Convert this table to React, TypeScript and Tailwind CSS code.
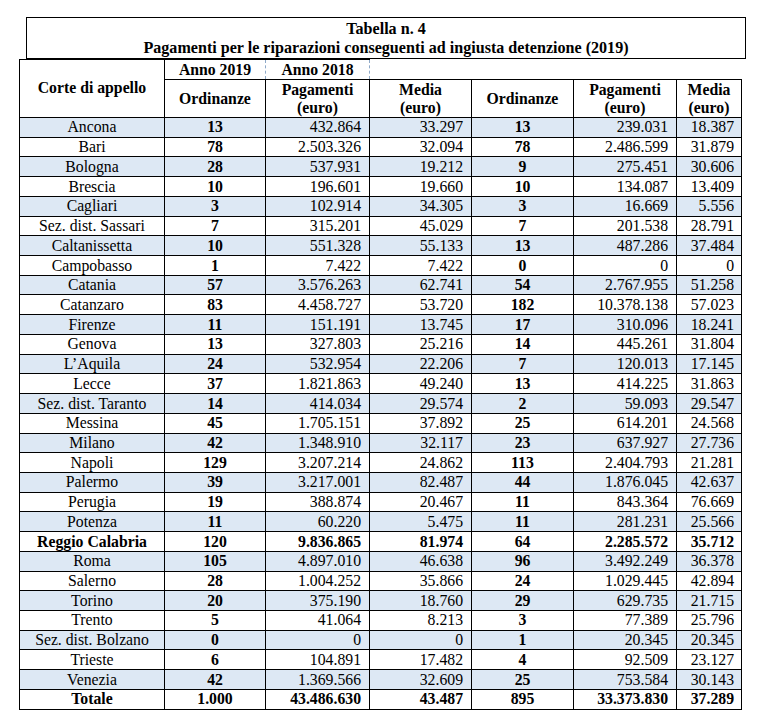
type Row = {
  corte: string;
  ord19: string;
  pag19: string;
  media19: string;
  ord18: string;
  pag18: string;
  media18: string;
  bold?: boolean;
};

const rows: Row[] = [
  { corte: 'Ancona', ord19: '13', pag19: '432.864', media19: '33.297', ord18: '13', pag18: '239.031', media18: '18.387' },
  { corte: 'Bari', ord19: '78', pag19: '2.503.326', media19: '32.094', ord18: '78', pag18: '2.486.599', media18: '31.879' },
  { corte: 'Bologna', ord19: '28', pag19: '537.931', media19: '19.212', ord18: '9', pag18: '275.451', media18: '30.606' },
  { corte: 'Brescia', ord19: '10', pag19: '196.601', media19: '19.660', ord18: '10', pag18: '134.087', media18: '13.409' },
  { corte: 'Cagliari', ord19: '3', pag19: '102.914', media19: '34.305', ord18: '3', pag18: '16.669', media18: '5.556' },
  { corte: 'Sez. dist. Sassari', ord19: '7', pag19: '315.201', media19: '45.029', ord18: '7', pag18: '201.538', media18: '28.791' },
  { corte: 'Caltanissetta', ord19: '10', pag19: '551.328', media19: '55.133', ord18: '13', pag18: '487.286', media18: '37.484' },
  { corte: 'Campobasso', ord19: '1', pag19: '7.422', media19: '7.422', ord18: '0', pag18: '0', media18: '0' },
  { corte: 'Catania', ord19: '57', pag19: '3.576.263', media19: '62.741', ord18: '54', pag18: '2.767.955', media18: '51.258' },
  { corte: 'Catanzaro', ord19: '83', pag19: '4.458.727', media19: '53.720', ord18: '182', pag18: '10.378.138', media18: '57.023' },
  { corte: 'Firenze', ord19: '11', pag19: '151.191', media19: '13.745', ord18: '17', pag18: '310.096', media18: '18.241' },
  { corte: 'Genova', ord19: '13', pag19: '327.803', media19: '25.216', ord18: '14', pag18: '445.261', media18: '31.804' },
  { corte: 'L\u2019Aquila', ord19: '24', pag19: '532.954', media19: '22.206', ord18: '7', pag18: '120.013', media18: '17.145' },
  { corte: 'Lecce', ord19: '37', pag19: '1.821.863', media19: '49.240', ord18: '13', pag18: '414.225', media18: '31.863' },
  { corte: 'Sez. dist. Taranto', ord19: '14', pag19: '414.034', media19: '29.574', ord18: '2', pag18: '59.093', media18: '29.547' },
  { corte: 'Messina', ord19: '45', pag19: '1.705.151', media19: '37.892', ord18: '25', pag18: '614.201', media18: '24.568' },
  { corte: 'Milano', ord19: '42', pag19: '1.348.910', media19: '32.117', ord18: '23', pag18: '637.927', media18: '27.736' },
  { corte: 'Napoli', ord19: '129', pag19: '3.207.214', media19: '24.862', ord18: '113', pag18: '2.404.793', media18: '21.281' },
  { corte: 'Palermo', ord19: '39', pag19: '3.217.001', media19: '82.487', ord18: '44', pag18: '1.876.045', media18: '42.637' },
  { corte: 'Perugia', ord19: '19', pag19: '388.874', media19: '20.467', ord18: '11', pag18: '843.364', media18: '76.669' },
  { corte: 'Potenza', ord19: '11', pag19: '60.220', media19: '5.475', ord18: '11', pag18: '281.231', media18: '25.566' },
  { corte: 'Reggio Calabria', ord19: '120', pag19: '9.836.865', media19: '81.974', ord18: '64', pag18: '2.285.572', media18: '35.712', bold: true },
  { corte: 'Roma', ord19: '105', pag19: '4.897.010', media19: '46.638', ord18: '96', pag18: '3.492.249', media18: '36.378' },
  { corte: 'Salerno', ord19: '28', pag19: '1.004.252', media19: '35.866', ord18: '24', pag18: '1.029.445', media18: '42.894' },
  { corte: 'Torino', ord19: '20', pag19: '375.190', media19: '18.760', ord18: '29', pag18: '629.735', media18: '21.715' },
  { corte: 'Trento', ord19: '5', pag19: '41.064', media19: '8.213', ord18: '3', pag18: '77.389', media18: '25.796' },
  { corte: 'Sez. dist. Bolzano', ord19: '0', pag19: '0', media19: '0', ord18: '1', pag18: '20.345', media18: '20.345' },
  { corte: 'Trieste', ord19: '6', pag19: '104.891', media19: '17.482', ord18: '4', pag18: '92.509', media18: '23.127' },
  { corte: 'Venezia', ord19: '42', pag19: '1.369.566', media19: '32.609', ord18: '25', pag18: '753.584', media18: '30.143' },
  { corte: 'Totale', ord19: '1.000', pag19: '43.486.630', media19: '43.487', ord18: '895', pag18: '33.373.830', media18: '37.289', bold: true },
];

const cell = 'border border-black p-0';
const twoLine = 'border border-black p-0 pt-[1px] align-middle leading-[18px]';

export default function App() {
  return (
    <div className="bg-white w-[757px] h-[723px] pt-[17px] text-black text-[15.75px] leading-none font-['Liberation_Serif',serif]">
      <div className="ml-[26px] w-[720px] h-[42px] border border-black flex flex-col items-center justify-center font-bold text-[16.1px] leading-[19px]">
        <div>Tabella n. 4</div>
        <div>Pagamenti per le riparazioni conseguenti ad ingiusta detenzione (2019)</div>
      </div>
      <table className="ml-[19px] w-[722px] table-fixed border-collapse">
        <colgroup>
          <col className="w-[145px]" />
          <col className="w-[101px]" />
          <col className="w-[104px]" />
          <col className="w-[102px]" />
          <col className="w-[102px]" />
          <col className="w-[103px]" />
          <col className="w-[65px]" />
        </colgroup>
        <thead>
          <tr className="h-[20px]">
            <th rowSpan={2} className={`${cell} align-middle pb-[2px]`}>Corte di appello</th>
            <th className="border border-black border-r-[#8ea9c8] [border-right-style:dashed] p-0">Anno 2019</th>
            <th className="border border-black border-l-[#8ea9c8] border-r-[#8ea9c8] [border-left-style:dashed] [border-right-style:dashed] p-0">
              Anno 2018
            </th>
            <th colSpan={4} className="border-0 p-0"></th>
          </tr>
          <tr className="h-[38px]">
            <th className={`${cell} align-middle`}>Ordinanze</th>
            <th className={twoLine}>Pagamenti<br />(euro)</th>
            <th className={twoLine}>Media<br />(euro)</th>
            <th className={`${cell} align-middle`}>Ordinanze</th>
            <th className={twoLine}>Pagamenti<br />(euro)</th>
            <th className={twoLine}>Media<br />(euro)</th>
          </tr>
        </thead>
        <tbody>
          {rows.map((r, i) => (
            <tr key={r.corte} className={`h-[19.73px] ${i % 2 === 0 ? 'bg-[#dde8f4]' : 'bg-white'} ${r.bold ? 'font-bold' : ''}`}>
              <td className={`${cell} text-center`}>{r.corte}</td>
              <td className={`${cell} text-center font-bold`}>{r.ord19}</td>
              <td className={`${cell} text-right pr-[8px]`}>{r.pag19}</td>
              <td className={`${cell} text-right pr-[8px]`}>{r.media19}</td>
              <td className={`${cell} text-center font-bold`}>{r.ord18}</td>
              <td className={`${cell} text-right pr-[8px]`}>{r.pag18}</td>
              <td className={`${cell} text-right pr-[7px]`}>{r.media18}</td>
            </tr>
          ))}
        </tbody>
      </table>
    </div>
  );
}
